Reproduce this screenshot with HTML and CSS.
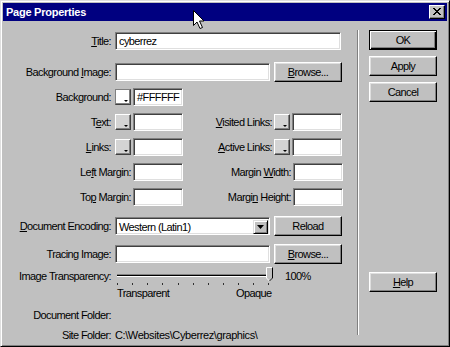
FILE: index.html
```html
<!DOCTYPE html>
<html lang="en">
<head>
    <meta charset="UTF-8">
    <title>Page Properties</title>
    <link rel="stylesheet" href="styles.css">
</head>
<body>
<div class="window">

    <!-- Title bar -->
    <div class="titlebar">
        <span class="title">Page Properties</span>
        <span class="close">
            <svg width="12" height="10" viewBox="0 0 12 10"><path d="M2 1 L9 8 M3 1 L10 8 M9 1 L2 8 M10 1 L3 8" stroke="#000" stroke-width="1"/></svg>
        </span>
    </div>

    <!-- Mouse pointer -->
    <svg class="cursor" width="13" height="20" viewBox="0 0 13 20">
        <path d="M0.5 0.5 L0.5 15.5 L4 12 L7 18.5 L9.5 17.5 L6.5 11 L11 11 Z" fill="#fff" stroke="#000" stroke-width="1"/>
    </svg>

    <div class="content">
        <div class="main">
            <div class="row r-title">
                <span class="lbl"><u>T</u>itle:</span>
                <div class="field w-title">cyberrez</div>
            </div>
            <div class="row r-bgimg">
                <span class="lbl">Background <u>I</u>mage:</span>
                <div class="field w-long"></div>
                <div class="btn"><u>B</u>rowse...</div>
            </div>
            <div class="row">
                <span class="lbl">Background:</span>
                <span class="swatch white"></span>
                <div class="field w-short">#FFFFFF</div>
            </div>
            <div class="row">
                <span class="lbl">T<u>e</u>xt:</span>
                <span class="swatch"></span>
                <div class="field w-short"></div>
                <span class="lbl2"><u>V</u>isited Links:</span>
                <span class="swatch"></span>
                <div class="field w-short"></div>
            </div>
            <div class="row">
                <span class="lbl"><u>L</u>inks:</span>
                <span class="swatch"></span>
                <div class="field w-short"></div>
                <span class="lbl2"><u>A</u>ctive Links:</span>
                <span class="swatch"></span>
                <div class="field w-short"></div>
            </div>
            <div class="row">
                <span class="lbl lbl-wide">Le<u>f</u>t Margin:</span>
                <div class="field w-short"></div>
                <span class="lbl3">Margin <u>W</u>idth:</span>
                <div class="field w-short"></div>
            </div>
            <div class="row">
                <span class="lbl lbl-wide">To<u>p</u> Margin:</span>
                <div class="field w-short"></div>
                <span class="lbl3">Margi<u>n</u> Height:</span>
                <div class="field w-short"></div>
            </div>
            <div class="row r-enc">
                <span class="lbl"><u>D</u>ocument Encoding:</span>
                <div class="field w-long select">
                    <span>Western (Latin1)</span>
                    <span class="drop">
                        <svg width="7" height="4" viewBox="0 0 7 4"><path d="M0 0 H7 L3.5 4 Z" fill="#000"/></svg>
                    </span>
                </div>
                <div class="btn">Reload</div>
            </div>
            <div class="row r-trace">
                <span class="lbl">Tracing Image:</span>
                <div class="field w-long"></div>
                <div class="btn"><u>B</u>rowse...</div>
            </div>
            <div class="row r-slider">
                <span class="lbl">Image Transparency:</span>
                <svg class="slider" width="160" height="20" viewBox="0 0 160 20">
                    <rect x="1" y="8" width="155" height="1" fill="#808080"/>
                    <rect x="1" y="9" width="155" height="1" fill="#000"/>
                    <rect x="1" y="10" width="155" height="1" fill="#fff"/>
                    <g fill="#303030">
                        <rect x="1" y="17" width="1" height="2"/>
                        <rect x="16" y="17" width="1" height="2"/>
                        <rect x="31" y="17" width="1" height="2"/>
                        <rect x="46" y="17" width="1" height="2"/>
                        <rect x="62" y="17" width="1" height="2"/>
                        <rect x="77" y="17" width="1" height="2"/>
                        <rect x="92" y="17" width="1" height="2"/>
                        <rect x="107" y="17" width="1" height="2"/>
                        <rect x="122" y="17" width="1" height="2"/>
                        <rect x="137" y="17" width="1" height="2"/>
                        <rect x="152" y="17" width="1" height="2"/>
                    </g>
                    <path d="M150.5 1.5 H156.5 V12 L153.5 15 L150.5 12 Z" fill="#c0c0c0" stroke="#fff" stroke-width="1"/>
                    <path d="M156.5 1.5 V12 L153.5 15" fill="none" stroke="#000" stroke-width="1"/>
                </svg>
                <span class="pct">100%</span>
            </div>
            <div class="row r-ends">
                <span class="end-l">Transparent</span>
                <span class="end-r">Opaque</span>
            </div>
            <div class="row r-doc">
                <span class="lbl">Document Folder:</span>
            </div>
            <div class="row r-site">
                <span class="lbl">Site Folder:</span>
                <span class="path">C:\Websites\Cyberrez\graphics\</span>
            </div>
        </div>

        <div class="sep"></div>

        <!-- Dialog buttons -->
        <div class="side">
            <div class="btn default">OK</div>
            <div class="btn">Apply</div>
            <div class="btn">Cancel</div>
            <div class="btn help"><u>H</u>elp</div>
        </div>
    </div>
</div>
</body>
</html>
```

FILE: styles.css
```css
* {
    margin: 0;
    padding: 0;
    box-sizing: border-box;
}

body {
    font-family: 'Liberation Sans', Arial, sans-serif;
    font-size: 11px;
    letter-spacing: -0.6px;
    color: #000;
    background-color: #c0c0c0;
}

u {
    text-decoration: underline;
}

/* Window frame */
.window {
    position: relative;
    width: 450px;
    height: 347px;
    background-color: #c0c0c0;
    border: 1px solid;
    border-color: #dfdfdf #000 #000 #dfdfdf;
    box-shadow: inset 1px 1px 0 #fff, inset -1px -1px 0 #808080;
    padding: 2px;
}

.titlebar {
    height: 18px;
    background-color: #000080;
    display: flex;
    align-items: center;
    justify-content: space-between;
    padding: 0 2px 0 3px;
}

.title {
    color: #fff;
    font-weight: bold;
    font-size: 11px;
    letter-spacing: -0.25px;
}

.close {
    width: 16px;
    height: 14px;
    background-color: #c0c0c0;
    border: 1px solid;
    border-color: #fff #000 #000 #fff;
    box-shadow: inset -1px -1px 0 #808080;
    display: flex;
    align-items: center;
    justify-content: center;
}

.cursor {
    position: absolute;
    left: 192px;
    top: 9px;
}

/* Body */
.content {
    display: flex;
    height: 323px;
}

.main {
    width: 354px;
    padding-top: 10px;
    display: flex;
    flex-direction: column;
    gap: 5px;
}

.row {
    display: flex;
    align-items: center;
    height: 20px;
    flex-shrink: 0;
}

.r-bgimg {
    margin-top: 6px;
}

.r-enc {
    margin-top: 4px;
}

.r-trace {
    margin-top: 3px;
}

.lbl {
    width: 108px;
    text-align: right;
    margin-right: 4px;
    white-space: nowrap;
}

.lbl-wide {
    width: 128px;
    margin-right: 2px;
}

.lbl2 {
    width: 89px;
    text-align: right;
    margin-right: 2px;
    white-space: nowrap;
}

.lbl3 {
    width: 108px;
    text-align: right;
    margin-right: 2px;
    white-space: nowrap;
}

/* Sunken text box */
.field {
    height: 18px;
    background-color: #fff;
    border: 1px solid;
    border-color: #808080 #fff #fff #808080;
    box-shadow: inset 1px 1px 0 #404040, inset -1px -1px 0 #dfdfdf;
    padding-left: 3px;
    line-height: 16px;
    white-space: nowrap;
}

.w-title {
    width: 226px;
}

.w-long {
    width: 155px;
    margin-right: 4px;
}

.w-short {
    width: 50px;
}

.select {
    display: flex;
    justify-content: space-between;
    padding-right: 1px;
    padding-top: 1px;
}

.drop {
    width: 15px;
    height: 14px;
    margin-top: 1px;
    background-color: #c0c0c0;
    border: 1px solid;
    border-color: #dfdfdf #000 #000 #dfdfdf;
    box-shadow: inset 1px 1px 0 #fff, inset -1px -1px 0 #808080;
    display: flex;
    align-items: center;
    justify-content: center;
}

/* Colour picker swatch */
.swatch {
    width: 16px;
    height: 16px;
    margin-right: 2px;
    background-color: #d4d4d4;
    border: 1px solid;
    border-color: #fff #404040 #404040 #fff;
    box-shadow: inset -1px -1px 0 #808080;
    position: relative;
}

.swatch.white {
    background-color: #fff;
    border-color: #808080 #404040 #404040 #808080;
}

.swatch::after {
    content: "";
    position: absolute;
    right: 2px;
    bottom: 2px;
    border-left: 2px solid transparent;
    border-right: 2px solid transparent;
    border-top: 2px solid #000;
}

/* Raised push button */
.btn {
    width: 68px;
    height: 20px;
    background-color: #c0c0c0;
    border: 1px solid;
    border-color: #fff #000 #000 #fff;
    box-shadow: inset -1px -1px 0 #808080, inset 1px 1px 0 #dfdfdf;
    text-align: center;
    line-height: 18px;
}

.btn.default {
    border-color: #000;
    box-shadow: inset 1px 1px 0 #fff, inset -1px -1px 0 #000, inset -2px -2px 0 #808080;
}

/* Slider */
.r-slider {
    margin-top: -3px;
}

.slider {
    margin-left: 1px;
}

.pct {
    margin-left: 9px;
}

.r-ends {
    margin-top: -8px;
    padding-left: 114px;
}

.end-l {
    width: 119px;
}

.r-doc {
    margin-top: -3px;
}

.r-site {
    margin-top: -5px;
}

.path {
    letter-spacing: -0.4px;
}

/* Separator and side column */
.sep {
    width: 2px;
    margin: 9px 0 9px;
    border-left: 1px solid #808080;
    border-right: 1px solid #fff;
}

.side {
    padding: 9px 0 0 10px;
    display: flex;
    flex-direction: column;
    gap: 6px;
}

.help {
    margin-top: 164px;
}
```
